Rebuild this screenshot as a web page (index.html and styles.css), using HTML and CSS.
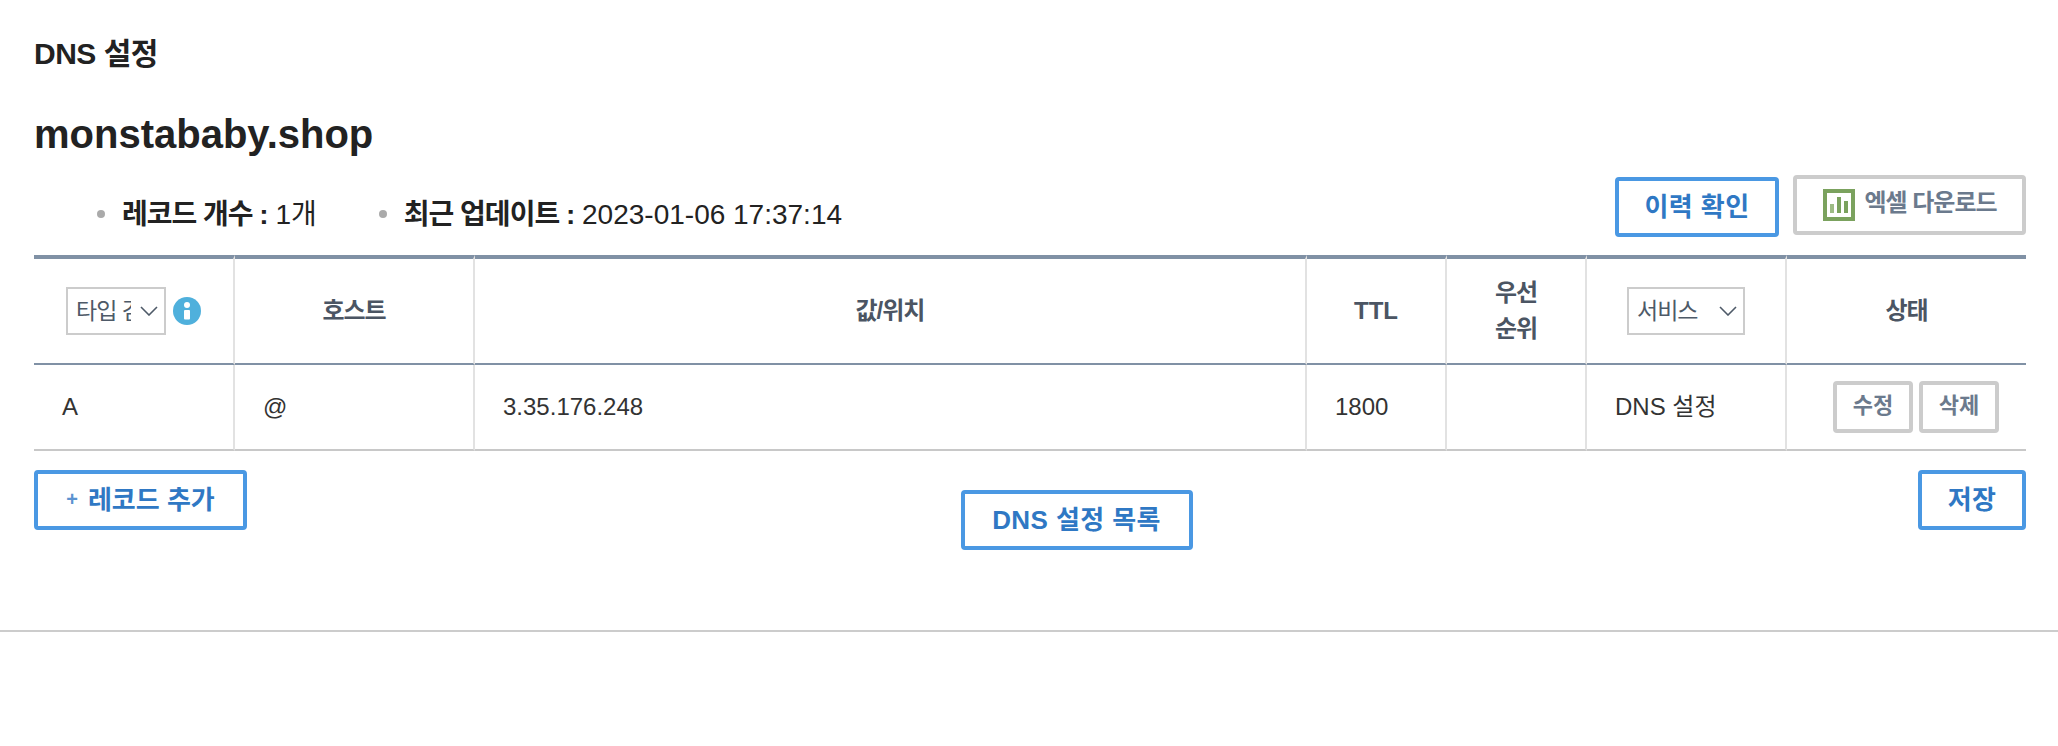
FILE: index.html
```html
<!DOCTYPE html>
<html lang="ko">
<head>
    <meta charset="UTF-8">
    <meta name="viewport" content="width=device-width, initial-scale=1.0">
    <title>DNS 설정</title>
    <link rel="stylesheet" href="styles.css">
</head>
<body>
    <div class="container">
        <h2 class="page-title">DNS 설정</h2>
        <h1 class="domain">monstababy.shop</h1>

        <div class="toolbar">
            <ul class="summary">
                <li><strong>레코드 개수 :</strong> 1개</li>
                <li><strong>최근 업데이트 :</strong> 2023-01-06 17:37:14</li>
            </ul>
            <div class="toolbar-btns">
                <button class="btn btn-blue btn-history">이력 확인</button>
                <button class="btn btn-gray btn-excel">
                    <svg class="excel-icon" width="32" height="32" viewBox="0 0 32 32">
                        <rect width="32" height="32" fill="#7ba25e"/>
                        <rect x="4" y="4" width="24" height="24" fill="#fff"/>
                        <rect x="7" y="15" width="4" height="9" fill="#9dbb85"/>
                        <rect x="14" y="8" width="4" height="16" fill="#7ba25e"/>
                        <rect x="21" y="12" width="4" height="12" fill="#7ba25e"/>
                    </svg>
                    엑셀 다운로드
                </button>
            </div>
        </div>

        <table class="dns-table">
            <colgroup>
                <col class="col-type">
                <col class="col-host">
                <col class="col-value">
                <col class="col-ttl">
                <col class="col-priority">
                <col class="col-service">
                <col>
            </colgroup>
            <thead>
                <tr>
                    <th>
                        <div class="type-filter">
                            <div class="select select-type">
                                <span class="select-text">타입 검색</span>
                                <svg class="chevron" width="18" height="10" viewBox="0 0 18 10"><path d="M1 1l8 8 8-8" fill="none" stroke="#4e5a68" stroke-width="1.6"/></svg>
                            </div>
                            <svg class="info-icon" width="28" height="28" viewBox="0 0 28 28">
                                <circle cx="14" cy="14" r="14" fill="#4fb0dc"/>
                                <circle cx="14" cy="8" r="3" fill="#fff"/>
                                <rect x="11" y="13" width="6" height="9.5" rx="1" fill="#fff"/>
                            </svg>
                        </div>
                    </th>
                    <th>호스트</th>
                    <th>값/위치</th>
                    <th class="th-ttl">TTL</th>
                    <th>우선<br>순위</th>
                    <th>
                        <div class="select select-service">
                            <span class="select-text">서비스</span>
                            <svg class="chevron" width="18" height="10" viewBox="0 0 18 10"><path d="M1 1l8 8 8-8" fill="none" stroke="#4e5a68" stroke-width="1.6"/></svg>
                        </div>
                    </th>
                    <th>상태</th>
                </tr>
            </thead>
            <tbody>
                <tr>
                    <td>A</td>
                    <td>@</td>
                    <td>3.35.176.248</td>
                    <td>1800</td>
                    <td></td>
                    <td>DNS 설정</td>
                    <td>
                        <div class="row-btns">
                            <button class="btn btn-gray btn-small">수정</button>
                            <button class="btn btn-gray btn-small">삭제</button>
                        </div>
                    </td>
                </tr>
            </tbody>
        </table>

        <div class="actions">
            <button class="btn btn-blue btn-add"><span class="plus">+</span>레코드 추가</button>
            <button class="btn btn-blue btn-list">DNS 설정 목록</button>
            <button class="btn btn-blue btn-save">저장</button>
        </div>
    </div>
    <hr class="footer-line">
</body>
</html>
```

FILE: styles.css
```css
* { box-sizing: border-box; }
body { margin: 0; background: #fff; color: #222; font-family: "Liberation Sans", "Noto Sans CJK KR", sans-serif; }
.container { padding: 34px 32px 0 34px; }

.page-title { margin: 0; font-size: 30px; line-height: 40px; letter-spacing: -0.5px; }
.domain { margin: 36px 0 0; font-size: 40px; line-height: 48px; }

.toolbar { display: flex; justify-content: space-between; align-items: flex-start; margin-top: 17px; }
.summary { display: flex; margin: 0; padding: 21px 0 0 88px; list-style: none; font-size: 28px; line-height: 38px; }
.summary strong { letter-spacing: -1px; }
.summary li { position: relative; margin-right: 87px; }
.summary li::before { content: ""; position: absolute; left: -25px; top: 14px; width: 8px; height: 8px; border-radius: 50%; background: #aaa; }
.toolbar-btns { display: flex; align-items: flex-start; gap: 14px; }

.btn { display: inline-flex; align-items: center; justify-content: center; height: 60px; padding: 0 0 4px; border: 4px solid #ccc; border-radius: 4px; background: #fff; font-family: inherit; font-size: 24px; font-weight: 700; cursor: pointer; }
.btn-blue { border-color: #4a98e3; color: #2f78c4; font-size: 26px; letter-spacing: 0.4px; padding-bottom: 6px; }
.btn-gray { color: #6b7a8d; }
.btn-history { width: 164px; margin-top: 2px; }
.btn-excel { width: 233px; padding-bottom: 10px; letter-spacing: -1px; }
.excel-icon { margin: 10px 10px 0 0; position: relative; left: 1px; }
.btn-small { width: 80px; height: 52px; padding-bottom: 9px; font-size: 22px; }

.dns-table { width: 100%; margin-top: 18px; border-collapse: separate; border-spacing: 0; table-layout: fixed; font-size: 24px; }
.col-type { width: 201px; }
.col-host { width: 240px; }
.col-value { width: 832px; }
.col-ttl { width: 140px; }
.col-priority { width: 140px; }
.col-service { width: 200px; }
.dns-table th { height: 110px; padding: 0; border-top: 4px solid #8091a5; border-bottom: 2px solid #8091a5; border-right: 2px solid #e2e2e2; color: #4b5563; line-height: 36px; font-weight: 700; letter-spacing: -1px; text-align: center; }
.dns-table .th-ttl { letter-spacing: 0; }
.dns-table td { height: 86px; padding: 0 0 0 28px; border-bottom: 2px solid #c8c8c8; border-right: 2px solid #e2e2e2; color: #333; line-height: 36px; }
.dns-table th:last-child, .dns-table td:last-child { border-right: 0; }

.type-filter { display: flex; align-items: center; padding-left: 32px; }
.select { display: flex; align-items: center; height: 48px; border: 2px solid #ccc; background: #fff; font-size: 23px; font-weight: 400; color: #4e5a68; letter-spacing: -1px; text-align: left; }
.select-text { overflow: hidden; white-space: nowrap; }
.select-type { width: 100px; padding-left: 8px; }
.select-type .select-text { width: 55px; flex: none; }
.select-type .chevron { margin-left: 9px; }
.select-service { width: 118px; margin-left: 40px; padding-left: 8px; }
.select-service .select-text { width: 80px; flex: none; }
.chevron { flex: none; margin-left: 2px; }
.info-icon { margin-left: 7px; }

.row-btns { display: flex; justify-content: flex-end; gap: 6px; padding-right: 27px; margin-left: -28px; }

.actions { display: flex; justify-content: space-between; align-items: flex-start; margin-top: 19px; }
.btn-add { width: 213px; letter-spacing: 0; }
.plus { margin-right: 10px; color: #5b93d0; font-size: 20px; font-weight: 700; position: relative; top: 2px; }
.btn-list { width: 232px; margin: 20px 0 0 -12px; }
.btn-save { width: 108px; }

.footer-line { margin: 80px 0 0; border: 0; border-top: 2px solid #ccc; }
```
